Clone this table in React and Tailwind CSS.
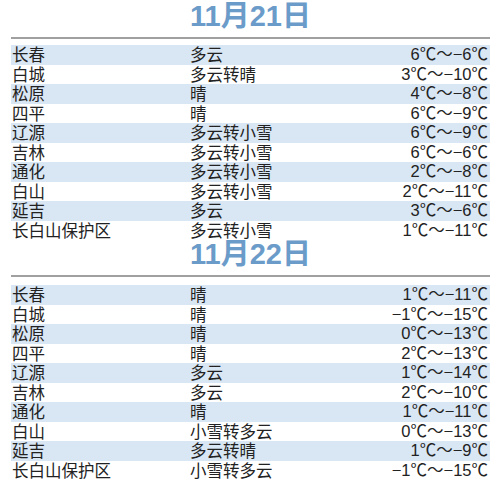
const day1 = [
  ["长春", "多云", "6℃～−6℃"],
  ["白城", "多云转晴", "3℃～−10℃"],
  ["松原", "晴", "4℃～−8℃"],
  ["四平", "晴", "6℃～−9℃"],
  ["辽源", "多云转小雪", "6℃～−9℃"],
  ["吉林", "多云转小雪", "6℃～−6℃"],
  ["通化", "多云转小雪", "2℃～−8℃"],
  ["白山", "多云转小雪", "2℃～−11℃"],
  ["延吉", "多云", "3℃～−6℃"],
  ["长白山保护区", "多云转小雪", "1℃～−11℃"],
];

const day2 = [
  ["长春", "晴", "1℃～−11℃"],
  ["白城", "晴", "−1℃～−15℃"],
  ["松原", "晴", "0℃～−13℃"],
  ["四平", "晴", "2℃～−13℃"],
  ["辽源", "多云", "1℃～−14℃"],
  ["吉林", "多云", "2℃～−10℃"],
  ["通化", "晴", "1℃～−11℃"],
  ["白山", "小雪转多云", "0℃～−13℃"],
  ["延吉", "多云转晴", "1℃～−9℃"],
  ["长白山保护区", "小雪转多云", "−1℃～−15℃"],
];

function Section({ title, rows, first }) {
  return (
    <div>
      <div
        className={`flex items-end justify-center ${first ? "h-[37px]" : "h-[35px]"}`}
      >
        <span className="text-[29px] leading-[29px] font-bold text-[#6a9bc9] mb-[6px] font-['Liberation_Sans','Noto_Sans_CJK_SC',sans-serif]">
          {title}
        </span>
      </div>
      <div className="h-[1.5px] bg-[#a0a0a0]" />
      <div className={first ? "mt-[6.5px]" : "mt-[8.5px]"}>
        {rows.map(([city, weather, temp], i) => (
          <div
            key={city}
            className={`flex items-center h-[19.5px] text-[16.5px] leading-[19.5px] text-[#222] ${
              i % 2 === 0 ? "bg-[#d9e6f4]" : ""
            }`}
          >
            <span className="w-[179px] pl-[1px]">{city}</span>
            <span className="flex-1">{weather}</span>
            <span className="pr-[2px] font-['Liberation_Sans','Noto_Sans_CJK_SC',sans-serif]">
              {temp}
            </span>
          </div>
        ))}
      </div>
    </div>
  );
}

export default function App() {
  return (
    <div className="w-[500px] h-[482px] bg-white pl-[11px] pr-[10px] overflow-hidden font-['Noto_Sans_CJK_SC',sans-serif]">
      <Section title="11月21日" rows={day1} first />
      <Section title="11月22日" rows={day2} />
    </div>
  );
}
